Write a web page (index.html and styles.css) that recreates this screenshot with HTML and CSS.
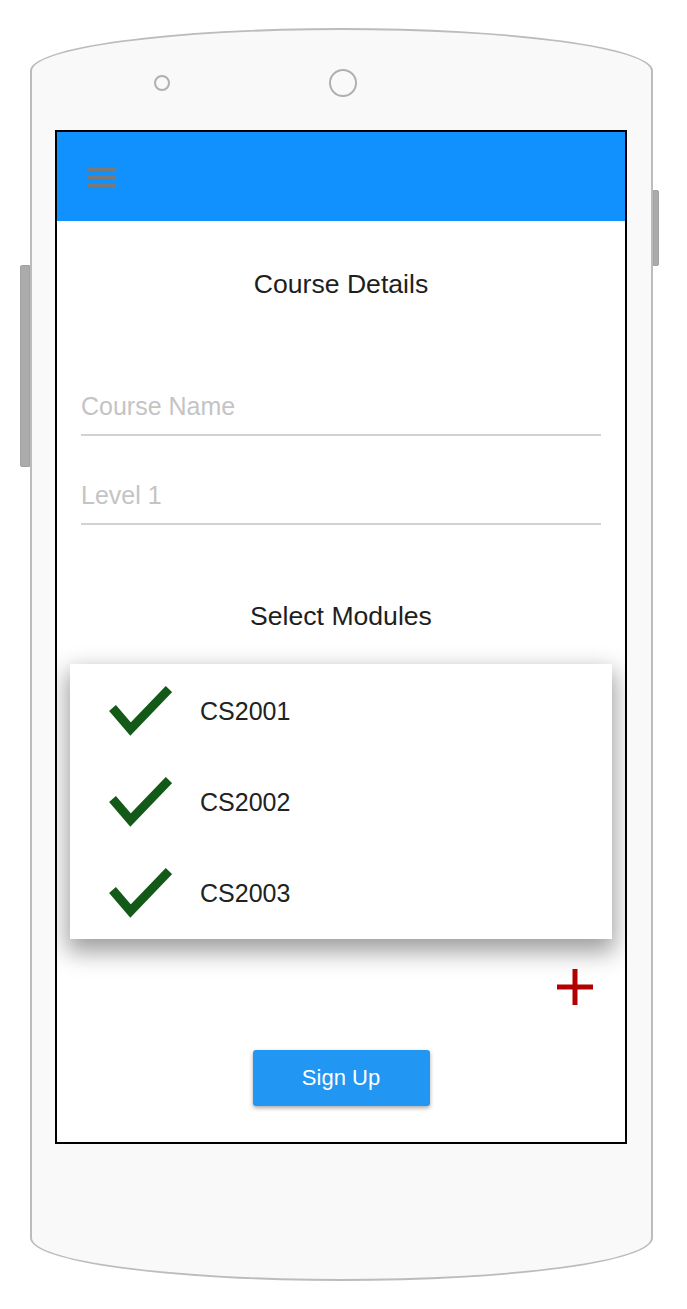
FILE: index.html
```html
<!DOCTYPE html>
<html lang="en">
<head>
<meta charset="utf-8">
<title>Course Details</title>
<link rel="stylesheet" href="styles.css">
</head>
<body>
<div class="device">
  <div class="side-key side-key-left"></div>
  <div class="side-key side-key-right"></div>
  <div class="sensors">
    <span class="sensor-dot"></span>
    <span class="sensor-cam"></span>
  </div>
  <div class="screen">
    <header class="appbar">
      <div class="menu-icon"><span></span><span></span><span></span></div>
    </header>
    <main class="content">
      <h1 class="section-title">Course Details</h1>
      <div class="field field-first">Course Name</div>
      <div class="field field-next">Level 1</div>
      <h2 class="section-title section-title-modules">Select Modules</h2>
      <ul class="modules">
        <li class="module">
          <svg class="check" viewBox="0 0 64 52" width="64" height="52"><polyline points="4.5,23 22.5,44 61,4"/></svg>
          <span class="module-code">CS2001</span>
        </li>
        <li class="module">
          <svg class="check" viewBox="0 0 64 52" width="64" height="52"><polyline points="4.5,23 22.5,44 61,4"/></svg>
          <span class="module-code">CS2002</span>
        </li>
        <li class="module">
          <svg class="check" viewBox="0 0 64 52" width="64" height="52"><polyline points="4.5,23 22.5,44 61,4"/></svg>
          <span class="module-code">CS2003</span>
        </li>
      </ul>
      <div class="add-row">
        <svg class="add-icon" viewBox="0 0 36 36" width="36" height="36"><rect x="0" y="15.5" width="36" height="5"/><rect x="15.5" y="0" width="5" height="36"/></svg>
      </div>
      <div class="actions">
        <button class="signup" type="button">Sign Up</button>
      </div>
    </main>
  </div>
</div>
</body>
</html>
```
FILE: styles.css
```css
* { box-sizing: border-box; }

html, body {
  margin: 0;
  padding: 0;
  background: #ffffff;
}

body {
  width: 687px;
  height: 1309px;
  overflow: hidden;
  font-family: "Liberation Sans", Arial, sans-serif;
}

.device {
  position: relative;
  margin: 28px 0 0 30px;
  width: 623px;
  height: 1253px;
  background: #f9f9f9;
  border: 2px solid #bcbcbc;
  border-radius: 50% / 43px;
}

.side-key {
  position: absolute;
  background: #ababab;
  border: 1px solid #a2a2a2;
}

.side-key-left {
  left: -12px;
  top: 235px;
  width: 10px;
  height: 202px;
  border-radius: 2px 0 0 2px;
}

.side-key-right {
  right: -8px;
  top: 160px;
  width: 6px;
  height: 76px;
  border-radius: 0 2px 2px 0;
}

.sensors {
  height: 100px;
  padding: 6px 0 0 122px;
  display: flex;
  align-items: center;
}

.sensor-dot {
  width: 16px;
  height: 16px;
  border: 2px solid #b0b0b0;
  border-radius: 50%;
}

.sensor-cam {
  margin-left: 159px;
  width: 28px;
  height: 28px;
  border: 2px solid #b0b0b0;
  border-radius: 50%;
}

.screen {
  margin-left: 23px;
  width: 572px;
  height: 1014px;
  border: 2px solid #000000;
  background: #ffffff;
  overflow: hidden;
}

.appbar {
  height: 89px;
  background: #1191fe;
  padding: 36px 0 0 30px;
}

.menu-icon {
  width: 28px;
  display: flex;
  flex-direction: column;
  gap: 5px;
}

.menu-icon span {
  display: block;
  height: 3px;
  background: #7a7a7a;
}

.content {
  padding: 0 24px;
}

.section-title {
  margin: 48px 0 0;
  font-size: 26.6px;
  font-weight: normal;
  line-height: 30px;
  color: #1e1e1e;
  text-align: center;
}

.section-title-modules {
  margin-top: 76px;
}

.field {
  font-size: 25px;
  line-height: 30px;
  color: #c4c4c4;
  padding-bottom: 13px;
  border-bottom: 2px solid #d2d2d2;
}

.field-first { margin-top: 92px; }
.field-next { margin-top: 44px; }

.modules {
  list-style: none;
  margin: 33px -11px 0;
  padding: 1px 0;
  background: #ffffff;
  box-shadow: 0 10px 22px 3px rgba(0, 0, 0, 0.38);
}

.module {
  height: 91px;
  display: flex;
  align-items: center;
  padding-left: 38px;
  gap: 28px;
}

.check {
  display: block;
  flex: none;
}

.check polyline {
  fill: none;
  stroke: #135a18;
  stroke-width: 9;
  stroke-linejoin: miter;
  stroke-linecap: butt;
}

.module-code {
  font-size: 25px;
  line-height: 30px;
  color: #222222;
}

.add-row {
  margin-top: 30px;
  display: flex;
  justify-content: flex-end;
  padding-right: 8px;
}

.add-icon {
  display: block;
  fill: #b20000;
}

.actions {
  margin-top: 45px;
  display: flex;
  justify-content: center;
}

.signup {
  width: 177px;
  height: 56px;
  border: none;
  border-radius: 3px;
  background: #2196f3;
  color: #ffffff;
  font-family: "Liberation Sans", Arial, sans-serif;
  font-size: 22px;
  box-shadow: 0 2px 4px rgba(0, 0, 0, 0.35);
  padding: 0;
}
```
